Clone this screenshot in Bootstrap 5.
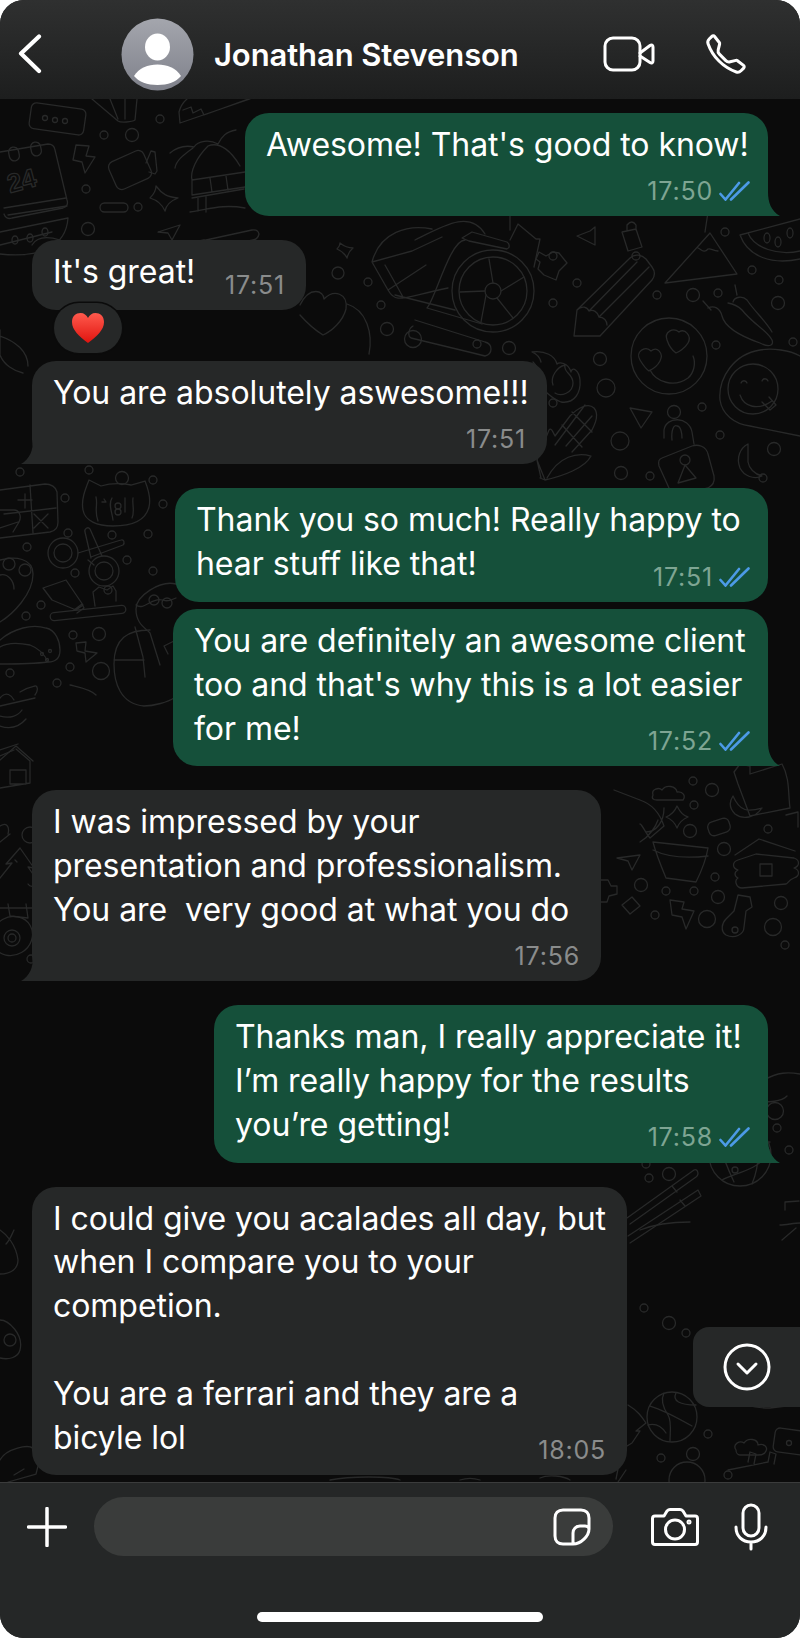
<!DOCTYPE html>
<html lang="en">
<head>
<meta charset="utf-8">
<title>Chat</title>
<link href="https://cdn.jsdelivr.net/npm/bootstrap@5.3.0/dist/css/bootstrap.min.css" rel="stylesheet">
<style>
html,body{margin:0;background:#fff;}
.phone{width:800px;height:1638px;border-radius:24px;overflow:hidden;font-family:Inter,"Liberation Sans",sans-serif;color:#fff;background:#0b0b0b;}
.topbar{height:99px;flex:none;padding-top:9px;background:linear-gradient(180deg,#2f3030,#1d1e1e);}
.who{font-size:31px;font-weight:600;line-height:1;margin-left:20px;letter-spacing:-.1px;}
.chat{flex:1 1 auto;min-height:0;padding:14px 32px 0;overflow:hidden;}
.wall{left:0;top:0;width:800px;height:1383px;}
.wall *{fill:none;stroke:#282929;stroke-width:1.3;stroke-linejoin:round;stroke-linecap:round;}
.wall text{font:700 26px "Liberation Sans",sans-serif;}
.bub{position:relative;padding:10px 21px 16px;border-radius:24px;font-size:32px;line-height:43.8px;letter-spacing:-.05px;white-space:pre;z-index:1;}
.bub-out{background:#15503a;align-self:flex-end;}
.bub-in{background:#262828;align-self:flex-start;}
.stamp{height:24px;line-height:24px;font-size:25px;letter-spacing:.8px;white-space:nowrap;gap:6px;flex:none;margin-bottom:-3px;}
.bub-out .stamp{color:#7ea593;}
.bub-in .stamp{color:#8a8c8c;}
.st-over{margin-top:22.5px;}
.st-below{margin-top:12.5px;}
.ticks{margin-right:-3px;fill:none;stroke:#4c9ae6;stroke-width:2.6;stroke-linecap:round;}
.tail{position:absolute;bottom:0;width:36px;height:24px;}
.tail-r{right:-12px;fill:#15503a;}
.tail-l{left:-11px;fill:#262828;}
.w1{width:523px}.w2{width:274px}.w3{width:515px}.w4{width:593px}.w5{width:595px}.w6{width:569px}.w7{width:554px}.w8{width:595px}
.m24{margin-top:24px}.m7{margin-top:7px}.m8{margin-top:8px}
.react{position:relative;z-index:2;width:68px;height:50px;margin:-7px 0 0 22px;background:#262828;border-radius:25px;box-shadow:0 0 0 1.5px #0b0b0b;}
.jump{right:0;top:1228px;width:107px;height:80px;background:#262828;border-radius:16px 0 0 16px;z-index:2;}
.composer{height:156px;flex:none;background:#252727;border-top:1px solid #3b3c3c;padding:14px 0 0 27px;}
.field{width:519px;height:59px;margin-left:27px;background:#3a3c3b;border-radius:30px;padding-right:22px;}
.homebar{left:257px;bottom:16px;width:286px;height:10px;background:#fff;border-radius:5px;}
.ico{fill:none;stroke:#fff;stroke-linecap:round;stroke-linejoin:round;flex:none;}
.ava{width:73px;height:73px;flex:none;}
.back{margin-left:18px;margin-right:79px;}
.vid{margin-left:auto;margin-right:50px;}
.tel{margin-right:53px;}
.plus{margin-top:10px;}
.cam{margin-left:38px;margin-top:11px;}
.mic{margin-left:35px;margin-top:6px;}
</style>
</head>
<body>
<div class="phone d-flex flex-column position-relative">
  <div class="topbar d-flex align-items-center">
    <svg class="ico back" width="24" height="40" viewBox="0 0 24 40" stroke-width="4.2"><path d="M21 2.500 3 19.500 21 37"/></svg>
    <svg class="ava" viewBox="0 0 73 73"><defs><linearGradient id="ag" x1="0" y1="0" x2="0" y2="1"><stop offset="0" stop-color="#a4a6ad"/><stop offset="1" stop-color="#7f818b"/></linearGradient></defs><circle cx="36.500" cy="36.500" r="36" fill="url(#ag)"/><ellipse cx="36.500" cy="29" rx="12.500" ry="13.500" fill="#fff"/><path d="M13 58c5-8 14-11.500 23.500-11.500S55 50 60 58c-5 6-13 9-23.500 9S18 64 13 58z" fill="#fff"/></svg>
    <div class="who">Jonathan Stevenson</div>
    <svg class="ico vid" width="52" height="36" viewBox="0 0 52 36" stroke-width="3"><rect x="2" y="2" width="35" height="32" rx="8"/><path d="M37 17 47 9.500c1.500-1 3-.5 3 1.500v14c0 2-1.500 2.500-3 1.500L37 20"/></svg>
    <svg class="ico tel" width="42" height="42" viewBox="0 0 16 16" stroke-width="1.150"><path d="M3.654 1.328a.678.678 0 0 0-1.015-.063L1.605 2.300c-.483.484-.661 1.169-.45 1.770a17.568 17.568 0 0 0 4.168 6.608 17.569 17.569 0 0 0 6.608 4.168c.601.211 1.286.033 1.770-.45l1.034-1.034a.678.678 0 0 0-.063-1.015l-2.307-1.794a.678.678 0 0 0-.58-.122l-2.190.547a1.745 1.745 0 0 1-1.657-.459L5.482 8.062a1.745 1.745 0 0 1-.46-1.657l.548-2.190a.678.678 0 0 0-.122-.58L3.654 1.328z"/></svg>
  </div>

  <div class="chat position-relative d-flex flex-column">
    <svg class="wall position-absolute" viewBox="0 99 800 1383" aria-hidden="true">
      <g>
        <circle cx="160" cy="119" r="4"/><circle cx="104" cy="135" r="4"/><circle cx="132" cy="135" r="6.500"/><circle cx="86" cy="189" r="4"/><circle cx="138" cy="207" r="4"/><circle cx="88" cy="229" r="6.500"/>
        <circle cx="338" cy="273" r="6"/><circle cx="368" cy="282" r="4"/><circle cx="381" cy="305" r="4"/><circle cx="387" cy="329" r="6.500"/><circle cx="413" cy="339" r="8.500"/><circle cx="477" cy="344" r="4"/><circle cx="509" cy="348" r="6.500"/>
        <circle cx="553" cy="256" r="4"/><circle cx="577" cy="283" r="4"/><circle cx="553" cy="303" r="4"/><circle cx="657" cy="295" r="4"/><circle cx="693" cy="295" r="6.500"/><circle cx="718" cy="293" r="4"/><circle cx="778" cy="303" r="6.500"/><circle cx="752" cy="270" r="4"/><circle cx="779" cy="280" r="4"/><circle cx="636" cy="256" r="4"/><circle cx="725" cy="232" r="4"/>
        <circle cx="600" cy="359" r="6.500"/><circle cx="606" cy="388" r="9"/><circle cx="553" cy="403" r="4"/><circle cx="716" cy="345" r="4"/><circle cx="793" cy="342" r="4"/><circle cx="674" cy="412" r="6.500"/><circle cx="702" cy="407" r="4"/><circle cx="620" cy="441" r="9"/><circle cx="720" cy="435" r="4"/><circle cx="774" cy="449" r="6.500"/><circle cx="621" cy="473" r="6.500"/><circle cx="650" cy="476" r="4"/><circle cx="763" cy="478" r="4"/>
        <circle cx="20" cy="472" r="4"/><circle cx="89" cy="470" r="4"/><circle cx="122" cy="478" r="6.500"/><circle cx="153" cy="480" r="4"/><circle cx="65" cy="498" r="4"/><circle cx="163" cy="504" r="4"/><circle cx="68" cy="533" r="4"/><circle cx="112" cy="535" r="4"/><circle cx="148" cy="534" r="4"/><circle cx="27" cy="547" r="4"/><circle cx="127" cy="560" r="4"/><circle cx="75" cy="573" r="4"/><circle cx="108" cy="590" r="4"/><circle cx="153" cy="571" r="4"/><circle cx="41" cy="605" r="4"/><circle cx="26" cy="616" r="4"/><circle cx="73" cy="635" r="4"/><circle cx="99" cy="634" r="6.500"/><circle cx="70" cy="667" r="4"/><circle cx="101" cy="671" r="8.500"/><circle cx="10" cy="673" r="4"/><circle cx="57" cy="683" r="4"/>
        <circle cx="30" cy="835" r="8"/><circle cx="40" cy="852" r="4"/><circle cx="110" cy="868" r="4"/><circle cx="56" cy="902" r="4"/><circle cx="152" cy="922" r="6.500"/><circle cx="146" cy="929" r="4"/><circle cx="169" cy="936" r="4"/><circle cx="89" cy="934" r="4"/><circle cx="31" cy="959" r="4"/>
        <circle cx="693" cy="781" r="4"/><circle cx="712" cy="790" r="6.500"/><circle cx="694" cy="805" r="4"/><circle cx="690" cy="831" r="6.500"/><circle cx="768" cy="829" r="4"/><circle cx="724" cy="849" r="6.500"/><circle cx="715" cy="877" r="4"/><circle cx="641" cy="885" r="6.500"/><circle cx="666" cy="891" r="4"/><circle cx="694" cy="891" r="4"/><circle cx="718" cy="897" r="6.500"/><circle cx="781" cy="903" r="6.500"/><circle cx="655" cy="915" r="4"/><circle cx="707" cy="919" r="8.500"/><circle cx="773" cy="927" r="8.500"/><circle cx="785" cy="945" r="4"/><circle cx="648" cy="1048" r="4"/><circle cx="734" cy="1072" r="6.500"/><circle cx="775" cy="1111" r="8.500"/><circle cx="777" cy="1128" r="4"/><circle cx="710" cy="1110" r="4"/><circle cx="646" cy="1164" r="4"/><circle cx="669" cy="1174" r="6.500"/><circle cx="789" cy="1150" r="4"/><circle cx="649" cy="1178" r="4"/>
        <circle cx="644" cy="1308" r="4"/><circle cx="669" cy="1323" r="6.500"/><circle cx="686" cy="1333" r="4"/><circle cx="708" cy="1434" r="4"/><circle cx="661" cy="1458" r="4"/><circle cx="693" cy="1454" r="6.500"/><circle cx="728" cy="1475" r="4"/><circle cx="687" cy="1480" r="18"/>
      </g>
      <rect x="30" y="106" width="55" height="26" rx="5" transform="rotate(8 58 119)"/><circle cx="45" cy="118" r="2.500"/><circle cx="55" cy="120" r="2.500"/><circle cx="65" cy="121" r="2.500"/>
      <path d="M92 99 118 121c3 2 14 1 17-1l2-21M110 99l8 20M125 99v20"/>
      <path d="M180 123 179 112c2-8 8-13 8-13M183 110l8-3 2 6 8-4 3 6 50-18M180 123l70-24"/>
      <g transform="translate(0 138)"><path d="M0 14 48 6q6 0 7 6l12 50q2 6-4 8L12 80q-6 2-8-4"/><path d="M4 70 66 60M8 77l59-9"/><rect x="9" y="9" width="10" height="14" rx="5" transform="rotate(-12 14 16)"/><rect x="31" y="4" width="10" height="14" rx="5" transform="rotate(-12 36 11)"/><text x="10" y="55" transform="rotate(-15 10 55)" font-size="28">24</text></g>
      <path d="M76 145 89 146 86 156 95 157 85 173 82 162 73 160z"/>
      <rect x="111" y="155" width="38" height="30" rx="6" transform="rotate(-24 130 170)"/><path d="M146 163 151 151l4 1 2 19-2 3-6-2"/>
      <path d="M170 153c6-5 15-8 24-6 4-6 15-8 24-3 4-8 8-12 18-14M175 168c1-7 7-12 18-20M192 180c-2-8 4-22 16-34 12-5 24 6 32 20M192 180l53-8M192 180v15M192 195l53-8M210 178l2 14M226 176l2 14M192 198l52-9M198 198v13M206 197v15M190 212c20-3 33-8 55-4"/>
      <path d="M156 186c6 8 11 11 22 12-8 3-12 8-13 13-3-7-8-11-15-13 4-4 6-7 6-12z"/>
      <rect x="100" y="203" width="28" height="9" rx="4.500"/>
      <path d="M0 232l68-14c-2 30-30 40-68 36M0 245l52-13"/><ellipse cx="45" cy="232" rx="3" ry="4"/><ellipse cx="30" cy="238" rx="3" ry="4"/><ellipse cx="15" cy="240" rx="3" ry="4"/>
      <path d="M158 232 180 225 172 240 168 233zM206 240l46-10q6-1 7 4-1 5-6 6l-43 9M205 240a8 8 0 1 0 4 14"/>
      <path d="M0 336c15 5 28 15 28 30M0 330v25c4 10 14 16 23 18"/>
      <path d="M340 243c5 4 8 5 13 5-4 3-5 6-6 10-2-4-5-7-10-9 2-2 3-4 3-6z"/>
      <path d="M372 262c8-30 36-38 60-33M372 262l40-11 30-14M372 262l16 28c8 14 12 8 60-2M388 290l38-25M395 295l60 15M385 265l18 32"/>
      <path d="M462 238l10-6 35 10c3 2 3 6 0 7l-38-8zM415 240c30-15 55-30 70-6M465 240c-15 0-30 60-38 68l55 16M415 320l70 22c8 2 8 12 0 14l-12-3-62-15c-4-2-2-10 2-12"/>
      <circle cx="493" cy="291" r="41"/><circle cx="493" cy="291" r="34"/><circle cx="493" cy="291" r="8"/><path d="M493 283l-4-24M501 291l23-14M497 298l16 20M486 295l-5 27M485 291l-25 1"/>
      <path d="M510 230 510 216 M510 240l8-16 18 15 4 0-6 28"/>
      <path d="M300 305c10-20 24-14 24-6 10-10 24-6 22 10-3 12-14 22-23 26-8-5-16-12-23-20"/><path d="M347 304c20 6 26 30 22 50"/>
      <path d="M590 231 595 227 595 245 577 236z M627 230v-5q5-6 9 0v5M622 232l14-3 6 18-14 4z"/>
      <path d="M546 256l7-4 6 1 8 10-8 8-3 9-12-5-6-6 2-7-4-3 3-7z"/>
      <path d="M574 336 577 310l53-52c5-5 12-3 16 1l6 8c3 4 3 9 0 13l-52 56-26 0zM577 310c5-5 10-3 12 1 4-2 9 1 10 6 5 0 8 4 8 8M589 311l48-49M599 317l50-50"/>
      <path d="M665 283 710 233 737 274zM698 248c3 1 6 6 10 1 3-1 5 2 10 2 M705 232l3-20"/>
      <path d="M740 235 800 219M740 235c8 22 32 30 60 24M748 233c6 15 30 23 52 18"/><ellipse cx="767" cy="238" rx="3" ry="5"/><ellipse cx="778" cy="242" rx="3" ry="5"/><ellipse cx="790" cy="233" rx="3" ry="5"/>
      <path d="M708 308c6-3 12 0 14 8 3 12 18 20 38 27 10 5 14 2 12-3-5-10-18-15-30-30-4-4-8-6-14-7M733 302c2-6 10-6 14-2 8 12 18 20 25 32M735 285l2 10M711 310l-8-9"/>
      <circle cx="669" cy="356" r="38"/><path d="M640 360c-5-8 5-15 11-9 6-5 13 2 9 10-3 6-9 9-11 10-3-2-6-6-9-11zM667 340c-3-8 6-13 12-8 6-4 13 4 9 11-3 5-9 9-12 10-3-2-7-7-9-13zM650 370c6 12 24 18 38 8 6-5 8-15 5-22"/>
      <path d="M533 362c6 6 5 14 2 20 6 4 14 16 26 20 14 2 20-10 19-22-1-10-8-14-9-8-3-10-12-10-14-8-2-8-12-14-25-12 5 2 8 6 9 10M553 385c-3-8 4-18 12-20-2 8 8 8 8 18 0 10-12 14-18 10"/>
      <circle cx="753" cy="389" r="25"/><path d="M800 356c-10-6-28-8-40-6-26 4-42 28-40 50 2 14 14 24 30 26l50 10M740 395c4 12 18 16 32 6M741 383c1-3 5-3 6 0M762 381c1-3 5-3 6 0M762 402l8 8 6-5-7-8"/>
      <path d="M545 480l-8-20 12-30c2-3 4 2 6 6M555 436l15-20c8-8 18-14 24-8 5 6 2 14-2 22l-20 22M562 425l20 22M572 412l20 20M585 405l-30 40M592 416l-26 30M545 480c18-4 40-12 46-24-14-4-32 0-44 22M537 460l4 18M545 480l-5-2"/>
      <path d="M630 408 652 412 641 428z"/>
      <path d="M664 438v-8c2-14 25-14 28 2l2 12M672 440c-1-10 2-16 5-14 4 0 5 8 5 12M662 458l30-12c6-2 14 0 16 8l6 22c1 6-2 10-6 12l-27 7c-6 1-10-2-12-7l-10-22c-1-4 0-7 3-8z"/><circle cx="685" cy="460" r="5"/><path d="M685 465l-7 18 18-5z"/>
      <path d="M748 444c-8 4-12 14-8 24 4 8 14 12 22 8 -8-2-13-8-14-14 0-6 0-12 0-18z"/>
      <path d="M32 245c6-10 18-8 28-5"/>
      <path d="M0 490 45 484c6 0 11 3 12 8l1 30c0 5-3 9-8 10L0 538M4 514l52-6M30 485l3 48M18 500h14M25 494v14M34 528l14-14M34 514l14 14"/><path d="M0 510h14c5 0 8 6 5 12l-6 10M0 528l18-6"/>
      <path d="M83 510c-2-10 2-20 6-30l12 6c10-3 20-3 30-1l14-4c4 10 6 18 4 26-3 12-15 19-36 19-16 0-28-5-30-16z"/><path d="M96 497c2 8-2 14 2 24M104 499l2 3-4 0M112 498c-4 6 0 14 1 22M125 498v14M133 498c-1 6 2 14-1 20"/><circle cx="118" cy="506" r="3"/><circle cx="118" cy="512" r="3"/>
      <circle cx="63" cy="553" r="15"/><circle cx="63" cy="553" r="9"/><circle cx="104" cy="571" r="15"/><circle cx="104" cy="571" r="9"/><path d="M78 553l43-13c3-1 4 3 2 5l-32 12M91 558l-6-26c-1-3 3-6 5-3l12 27M88 560l6 5"/>
      <path d="M0 560c15-4 33-2 33 14 0 20-20 40-33 48"/><circle cx="9" cy="564" r="6"/><circle cx="25" cy="570" r="6"/><path d="M0 575c8-2 14 6 14 14"/>
      <path d="M43 588l23-8 17 25-7 5-24-10zM74 610l8-6 2 4-7 5"/>
      <rect x="50" y="609" width="76" height="8" rx="4" transform="rotate(-6 88 613)"/><path d="M95 606l-2-14 6-5 8 3 6-4 3 5v10"/>
      <path d="M176 584c-16-4-40 12-40 25 0 14 8 18 14 24l10 32M136 605c8 6 16-8 26-5 5 2 10 0 14-2M150 630c-22 0-36 8-36 34 0 18 6 40 30 42 10 0 24-4 30-8M135 627l8 30 2 20M114 660h30M176 640l-12 6 4 8"/>
      <circle cx="154" cy="600" r="5"/><circle cx="167" cy="603" r="5"/>
      <path d="M0 640c14-12 32-16 46-12 10 2 14 14 14 22 0 8-4 12-12 12-16 2-30 2-48 2M0 647c8-5 20-4 30-2 8 3 14 8 18 17"/><circle cx="42" cy="654" r="1.500"/><circle cx="50" cy="651" r="1.500"/><circle cx="47" cy="660" r="1.500"/>
      <path d="M76 643 86 642 85 651 97 653 86 662 85 653 77 651z"/>
      <path d="M0 706l35-8M0 698c6-8 12-2 14 2M20 692c8-5 10-5 15-6 2-1 4 4 0 9M70 685c8 2 20 4 26 10"/>
      <path d="M0 716c10 3 18 0 22-6M0 726c12 4 20 0 26-7"/><path d="M0 750 18 744M0 756l14-6"/>
      <path d="M0 760l16-14 17 15M0 788l30-5v-22l-14-12M10 770h16v14H10z"/>
      <path d="M0 826c6-4 10 0 8 8M0 842l10-8"/>
      <path d="M55 845c-5-10 5-18 15-22 20-8 45-3 60 8 8 6 17 18 17 28 0 14-18 22-35 18-14-3-24-6-36-12M55 845c5 14 16 22 32 24M64 870l26 2M66 860l6 26 20-8-8-10M75 848l9-1M98 830c4 12 12 20 24 24M112 825c4 10 8 14 18 20"/>
      <path d="M20 848l-14 16 6-1-12 15M20 848l14 20-6-1 14 20-8 1 16 14-14 6H0M8 904l2 12 18 2-2-14M15 860l2 2M28 884c2 3 6 3 8 1"/>
      <path d="M76 916c8-14 22-20 36-18 8 1 12 10 10 14-6 4-14 4-26-2l-6-10c-4 0-4 0-6 0M94 905c2 8-2 16-6 20l-14 0c-4-2-2-8 2-10"/>
      <ellipse cx="12" cy="936" rx="21" ry="19" transform="rotate(-30 12 936)"/><circle cx="12" cy="938" r="8"/><circle cx="12" cy="938" r="4"/>
      <path d="M50 945c2-5 8-6 8-6l2-6 3 5 4-8 2 8 6 6c2 8-6 12-10 12-8-3-14-6-15-11zM70 958l14 8"/>
      <circle cx="122" cy="950" r="21"/><path d="M130 944c3 2 5 4 4 8M104 966c-8 4-16 4-30 10"/>
      <path d="M734 772l6-8 10 2 0 8 32-10c8 14 6 30 8 44l-40 8-12-32zM752 764c6-6 12-8 16-4M733 796c-4 6-4 12 2 18 8 6 20 4 27-6-14 4-22 4-29-12z"/>
      <path d="M653 795c-2-6 6-8 9-5 4-6 14-4 15 2 6-1 9 4 6 8l-26 0c-3 0-6-1-4-5z"/>
      <path d="M640 800c12 4 20 14 24 26l-14 12c-4-4-8-14-10-14M646 832c10 0 18-10 18-24M614 790l26 10M640 842c10-6 16-16 18-22"/>
      <path d="M677 806c3 6 7 10 11 11-5 2-9 6-11 11-2-5-6-9-11-11 5-2 9-6 11-11z"/>
      <rect x="708" y="820" width="22" height="14" rx="5" transform="rotate(-18 719 827)"/><path d="M786 815l12-3v15"/>
      <path d="M653 842l55 6c-2 12-8 26-12 34l-30-4c-5-12-10-24-13-36zM653 850c16 8 38 8 55 6"/>
      <path d="M735 855l24-16 36 12M738 870c-6-2-6-8 0-10l18-6 38 4c6 2 6 8 0 10 6 2 6 8 0 10s-6 6-8 6l-44 4c-6 0-8-8-4-10-4-2-4-6 0-8zM760 864h12v12h-12z"/>
      <path d="M617 858 640 855 632 870 628 861z"/>
      <path d="M600 880h8l3 6h6v8l-8 2-2 6h-7M622 905l10-8 8 9-10 8z"/>
      <path d="M670 900l14 2-2 7 12 2-8 18-4-12-10-2z"/>
      <path d="M738 895l12 2 2 10-6 4-2 16c0 8-10 12-18 8-6-4-4-12 0-16l8-8z"/><circle cx="735" cy="930" r="3"/>
      <circle cx="622" cy="1070" r="8"/><path d="M629 1076l8 8M640 1045l30 2-6 14-14 2 -6-6M660 1072l-24-2"/>
      <path d="M658 1085l36-13 8 22-12 6M664 1095l6-14 6 8 8-8 6 10M680 1105c8-4 16-8 24-9l-1-8 28 8-22 18-2-8c-12 2-20 6-27 8-2-6-4-10 0-19z"/>
      <path d="M740 1090c4-8 14-6 24-10 14-8 24-8 36-6M739 1088c-2 10 8 14 18 14 12 0 24 0 30-6M754 1092c5-3 6 4 4 8"/>
      <path d="M738 1096c2 6 4 10 10 12-5 2-8 8-10 12-2-4-5-10-10-12 5-2 8-6 10-12z"/>
      <path d="M642 1100l22-4M648 1100l16 58M658 1098l16 58M646 1130l16-6M652 1145l16-6M674 1112l18 42 12-4-14-42zM628 1135c8 4 18 4 24 4M638 1142l14 8M684 1125l12-4M680 1102c8-3 14 0 18 4M697 1106l-10-6"/>
      <circle cx="740" cy="1155" r="31"/><path d="M712 1142c16 2 40 2 58 0M710 1162l60-12M722 1130c-4 10-2 22 12 52M752 1126c6 10 10 34 0 58M722 1180c10-6 36-10 44-24"/><circle cx="720" cy="1144" r="3"/><circle cx="755" cy="1144" r="3"/><circle cx="735" cy="1170" r="3"/>
      <path d="M627 1218l67-48c3-2 6 4 2 7l-66 47M628 1236l70-46 3 6-71 47M672 1186l5 6M680 1200l5 6"/>
      <circle cx="672" cy="1417" r="25"/><path d="M650 1406c14 4 28 12 42 20M664 1393c-4 8 0 16 4 22s2 18 2 26M648 1425c8-2 14 2 18 8M676 1393c-4 8 4 12 20 12"/>
      <path d="M736 1450c-4-6 4-10 8-7 4-6 14-4 14 2 6-2 10 2 8 6-1 3-4 4-8 4h-18c-2 0-4-2-4-5z"/>
      <rect x="774" y="1430" width="40" height="24" rx="5" transform="rotate(8 794 1442)"/><circle cx="789" cy="1443" r="2.500"/>
      <path d="M728 1470l40-8M748 1462l2-10 6 2-2 10M768 1462l2-10 6 2-2 10"/>
      <path d="M628 1405c10 6 14 12 18 18l-10 8 4 0-8 12-10 6-6 30"/>
      <path d="M740 1400c4 6 16 8 30 8l14-6M770 1408l16-2"/>
      <path d="M640 1230c20-8 40-8 50-8M780 1225c6 0 14-2 20-2M785 1210v-8l14-1M782 1240l14-12"/>
      <path d="M0 1230c6 4 16 14 18 30 0 8-6 14-18 14M6 1244c4-4 6-10 8-14M0 1320c8 0 24 14 20 30-2 8-12 10-20 8"/>
      <circle cx="10" cy="1340" r="6"/><path d="M0 1460c6-12 30-16 32-12 4 0 6 4 8 10l-4 16-28 8M14 1475l10-6"/>
      <path d="M626 1470l-8 12M540 1478c8-4 24-2 30 2M460 1480c6-2 14-2 20 0M330 1480c20-4 60-4 70 0"/>
    </svg>

    <div class="bub bub-out w1"><div>Awesome! That's good to know!</div><div class="stamp st-below d-flex justify-content-end align-items-center"><span>17:50</span><svg class="ticks" width="31" height="20" viewBox="0 0 31 20"><path d="M1.500 13 6.500 18.500 20 2M12 18.500 29.500 1.500"/></svg></div><svg class="tail tail-r" viewBox="0 0 36 24"><path d="M24 0C24 10 27 19 36 24H0V0z"/></svg></div>

    <div class="bub bub-in w2 m24"><div class="d-flex justify-content-between"><div>It's great!</div><div class="stamp st-over d-flex"><span>17:51</span></div></div></div>
    <div class="react d-flex align-items-center justify-content-center"><svg width="34" height="32" viewBox="0 0 34 32"><defs><linearGradient id="hg" x1="0" y1="0" x2="0" y2="1"><stop offset="0" stop-color="#ff5a4d"/><stop offset="1" stop-color="#e0140f"/></linearGradient></defs><path d="M17 31C8 24 1 18 1 10 1 4 5 1 9.500 1 13 1 15.500 3 17 6 18.500 3 21 1 24.500 1 29 1 33 4 33 10 33 18 26 24 17 31z" fill="url(#hg)"/></svg></div>

    <div class="bub bub-in w3 m8"><div>You are absolutely aswesome!!!</div><div class="stamp st-below d-flex justify-content-end"><span>17:51</span></div><svg class="tail tail-l" viewBox="0 0 36 24"><path d="M12 0C12 10 9 19 0 24H36V0z"/></svg></div>

    <div class="bub bub-out w4 m24"><div>Thank you so much! Really happy to</div><div class="d-flex justify-content-between"><div>hear stuff like that!</div><div class="stamp st-over d-flex align-items-center"><span>17:51</span><svg class="ticks" width="31" height="20" viewBox="0 0 31 20"><path d="M1.500 13 6.500 18.500 20 2M12 18.500 29.500 1.500"/></svg></div></div></div>

    <div class="bub bub-out w5 m7"><div>You are definitely an awesome client</div><div>too and that's why this is a lot easier</div><div class="d-flex justify-content-between"><div>for me!</div><div class="stamp st-over d-flex align-items-center"><span>17:52</span><svg class="ticks" width="31" height="20" viewBox="0 0 31 20"><path d="M1.500 13 6.500 18.500 20 2M12 18.500 29.500 1.500"/></svg></div></div><svg class="tail tail-r" viewBox="0 0 36 24"><path d="M24 0C24 10 27 19 36 24H0V0z"/></svg></div>

    <div class="bub bub-in w6 m24"><div>I was impressed by your</div><div>presentation and professionalism.</div><div>You are  very good at what you do</div><div class="stamp st-below d-flex justify-content-end"><span>17:56</span></div><svg class="tail tail-l" viewBox="0 0 36 24"><path d="M12 0C12 10 9 19 0 24H36V0z"/></svg></div>

    <div class="bub bub-out w7 m24"><div>Thanks man, I really appreciate it!</div><div>I’m really happy for the results</div><div class="d-flex justify-content-between"><div>you’re getting!</div><div class="stamp st-over d-flex align-items-center"><span>17:58</span><svg class="ticks" width="31" height="20" viewBox="0 0 31 20"><path d="M1.500 13 6.500 18.500 20 2M12 18.500 29.500 1.500"/></svg></div></div><svg class="tail tail-r" viewBox="0 0 36 24"><path d="M24 0C24 10 27 19 36 24H0V0z"/></svg></div>

    <div class="bub bub-in w8 m24"><div>I could give you acalades all day, but</div><div>when I compare you to your</div><div>competion.</div><div>&nbsp;</div><div>You are a ferrari and they are a</div><div class="d-flex justify-content-between"><div>bicyle lol</div><div class="stamp st-over d-flex"><span>18:05</span></div></div></div>

    <div class="jump position-absolute d-flex align-items-center justify-content-center"><svg class="ico" width="48" height="48" viewBox="0 0 48 48" stroke-width="3"><circle cx="24" cy="24" r="22"/><path d="M15 21 24 30 33 21"/></svg></div>
  </div>

  <div class="composer d-flex align-items-start">
    <svg class="ico plus" width="40" height="40" viewBox="0 0 40 40" stroke-width="3.500"><path d="M20 1.500V38.500M1.500 20H38.500"/></svg>
    <div class="field d-flex align-items-center justify-content-end">
      <svg class="ico" width="38" height="38" viewBox="0 0 38 38" stroke-width="3"><path d="M36 21V10C36 5 33 2 28 2H10C5 2 2 5 2 10V28C2 33 5 36 10 36H20C28 36 36 28 36 21C36 19 35 18 32 18H27C23 18 20 21 20 25V36"/></svg>
    </div>
    <svg class="ico cam" width="48" height="38" viewBox="0 0 48 38" stroke-width="3"><path d="M4 8H13L16 3C17 2 18 1.500 19 1.500H29C30 1.500 31 2 32 3L35 8H44C45.500 8 46.500 9 46.500 10.500V34C46.500 35.500 45.500 36.500 44 36.500H4C2.500 36.500 1.500 35.500 1.500 34V10.500C1.500 9 2.500 8 4 8Z"/><circle cx="24" cy="21.500" r="9.500"/><circle cx="38" cy="14" r="1"/></svg>
    <svg class="ico mic" width="34" height="48" viewBox="0 0 34 48" stroke-width="3"><rect x="9" y="2" width="16" height="31" rx="8"/><path d="M2 24C2 33 8 39 17 39S32 33 32 24M17 39V46"/></svg>
  </div>
  <div class="homebar position-absolute"></div>
</div>
<script src="https://cdn.jsdelivr.net/npm/bootstrap@5.3.0/dist/js/bootstrap.bundle.min.js"></script>
</body>
</html>
